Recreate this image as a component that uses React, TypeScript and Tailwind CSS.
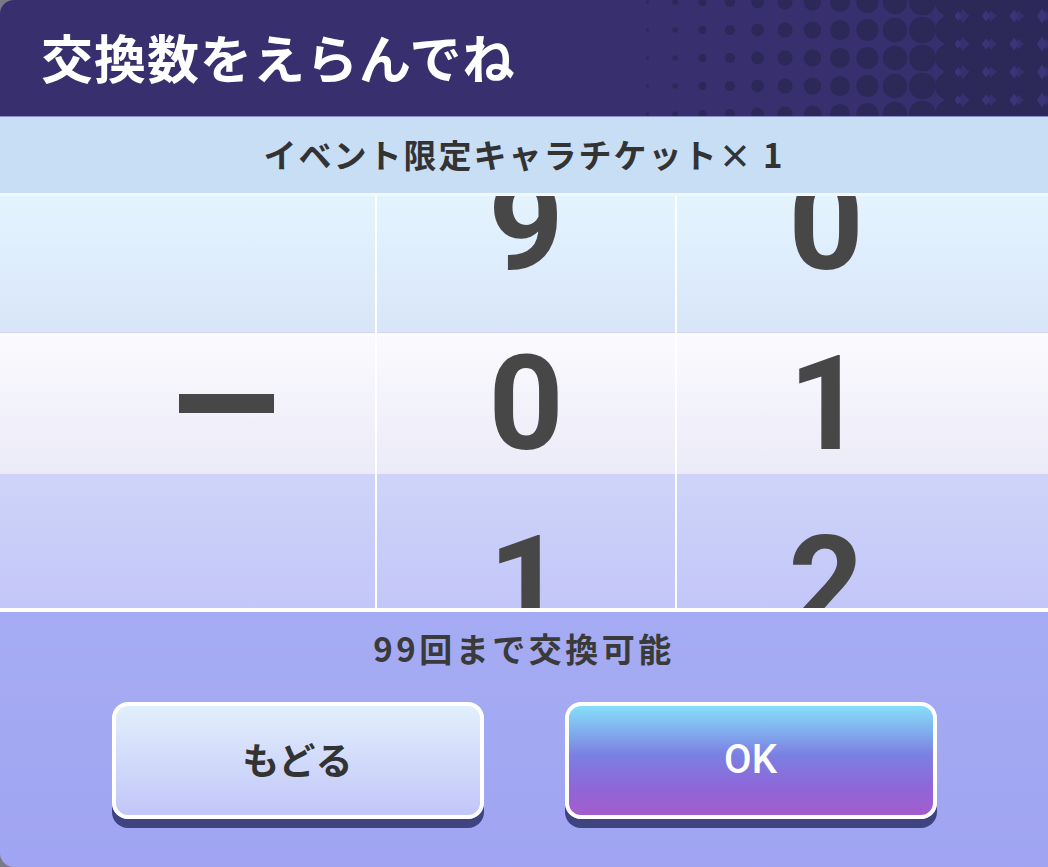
import React from "react";

const JP = { fontFamily: '"Noto Sans CJK JP", "Noto Sans", sans-serif' };
const NUM = { fontFamily: 'Roboto, "Noto Sans", sans-serif' };

// halftone dots that grow toward the right edge of the header
function Halftone() {
  const dots: React.ReactNode[] = [];
  for (let row = 0; row < 6; row++) {
    for (let col = 0; col < 17; col++) {
      const x = 620 + col * 27.5;
      const y = 2 + row * 28;
      const r = Math.max(0, Math.min(16, (x - 612) * 0.043));
      if (r > 0.4) dots.push(<circle key={`${row}-${col}`} cx={x} cy={y} r={r} fill="#2c2858" />);
    }
  }
  const sparks: React.ReactNode[] = [];
  for (let row = 0; row < 5; row++) {
    for (let col = 0; col < 4; col++) {
      const cx = 958 + col * 28;
      const cy = 16 + row * 28;
      const s = 5 + col * 0.8;
      sparks.push(
        <path
          key={`s${row}-${col}`}
          d={`M${cx} ${cy - s} L${cx + s * 0.7} ${cy} L${cx} ${cy + s} L${cx - s * 0.7} ${cy} Z`}
          fill="#3a3578"
        />,
      );
    }
  }
  return (
    <svg className="pointer-events-none absolute inset-0" width="1048" height="116" viewBox="0 0 1048 116">
      {dots}
      {sparks}
    </svg>
  );
}

function Wheel({ values }: { values: string[] }) {
  return (
    <div className="flex w-[298px] shrink-0 flex-col" style={{ marginTop: -62 }}>
      {values.map((v, i) => (
        <div
          key={i}
          className="flex h-[180px] shrink-0 items-center justify-center text-[131px] font-bold leading-none text-[#474747]"
          style={NUM}
        >
          {v}
        </div>
      ))}
    </div>
  );
}

export default function App() {
  return (
    <div className="h-[867px] w-[1048px] overflow-hidden bg-[#7a7a86]">
      <div className="flex h-full w-full flex-col overflow-hidden rounded-tl-[14px] rounded-bl-[14px]">
        {/* title bar */}
        <div className="relative h-[116px] shrink-0 bg-[#372f6e]">
          <Halftone />
          <h1
            className="relative flex h-full items-center pb-[3px] pl-[41px] text-[52px] font-bold tracking-[1px] text-white"
            style={JP}
          >
            交換数をえらんでね
          </h1>
        </div>
        <div className="h-px bg-[#8c8fc9]" />

        {/* item name */}
        <div className="flex h-[76px] shrink-0 items-center justify-center bg-[#c8def5]">
          <span className="text-[33px] font-bold tracking-[2px] text-[#333]" style={JP}>
            イベント限定キャラチケット× 1
          </span>
        </div>
        <div className="h-[3px] bg-[#f4f8fe]" />

        {/* number picker */}
        <div className="relative h-[412px] shrink-0 overflow-hidden">
          <div className="absolute inset-0 flex flex-col">
            <div className="h-[137px] border-b border-[#d2d6e8] bg-gradient-to-b from-[#e4f4fe] to-[#d8e5f9]" />
            <div className="h-[141px] bg-gradient-to-b from-[#fbfbfe] to-[#ebeaf8]" />
            <div className="flex-1 bg-gradient-to-b from-[#ced4f9] to-[#c3c6f8]" />
          </div>
          <div className="relative flex h-full items-start">
            <div className="flex h-full w-[375px] shrink-0 items-center pl-[179px] pt-[2px]">
              <div className="h-[19px] w-[95px] bg-[#474747]" />
            </div>
            <div className="h-full w-[2px] shrink-0 bg-white" />
            <Wheel values={["9", "0", "1"]} />
            <div className="h-full w-[2px] shrink-0 bg-white" />
            <Wheel values={["0", "1", "2"]} />
          </div>
        </div>
        <div className="h-[4px] bg-white" />

        {/* footer */}
        <div className="flex flex-1 flex-col items-center bg-gradient-to-b from-[#a6acf3] to-[#a0a4f2]">
          <p className="mt-[12px] text-[33px] font-bold tracking-[3.5px] text-[#3a3a3a]" style={JP}>
            99回まで交換可能
          </p>
          <div className="mt-[28px] flex gap-[81px]">
            <button
              type="button"
              className="flex h-[117px] w-[372px] items-center justify-center rounded-[16px] border-[4px] border-white bg-gradient-to-b from-[#e2effc] to-[#c2c6f8] text-[37px] font-bold text-[#333] shadow-[0_9px_0_#3f4380]"
              style={JP}
            >
              もどる
            </button>
            <button
              type="button"
              className="flex h-[117px] w-[372px] items-center justify-center rounded-[16px] border-[4px] border-white bg-[linear-gradient(to_bottom,#86dff9_0%,#7b80e2_45%,#8f66d9_75%,#a35ccb_100%)] text-[40px] font-medium text-white shadow-[0_9px_0_#3f4380]"
              style={NUM}
            >
              OK
            </button>
          </div>
        </div>
      </div>
    </div>
  );
}
